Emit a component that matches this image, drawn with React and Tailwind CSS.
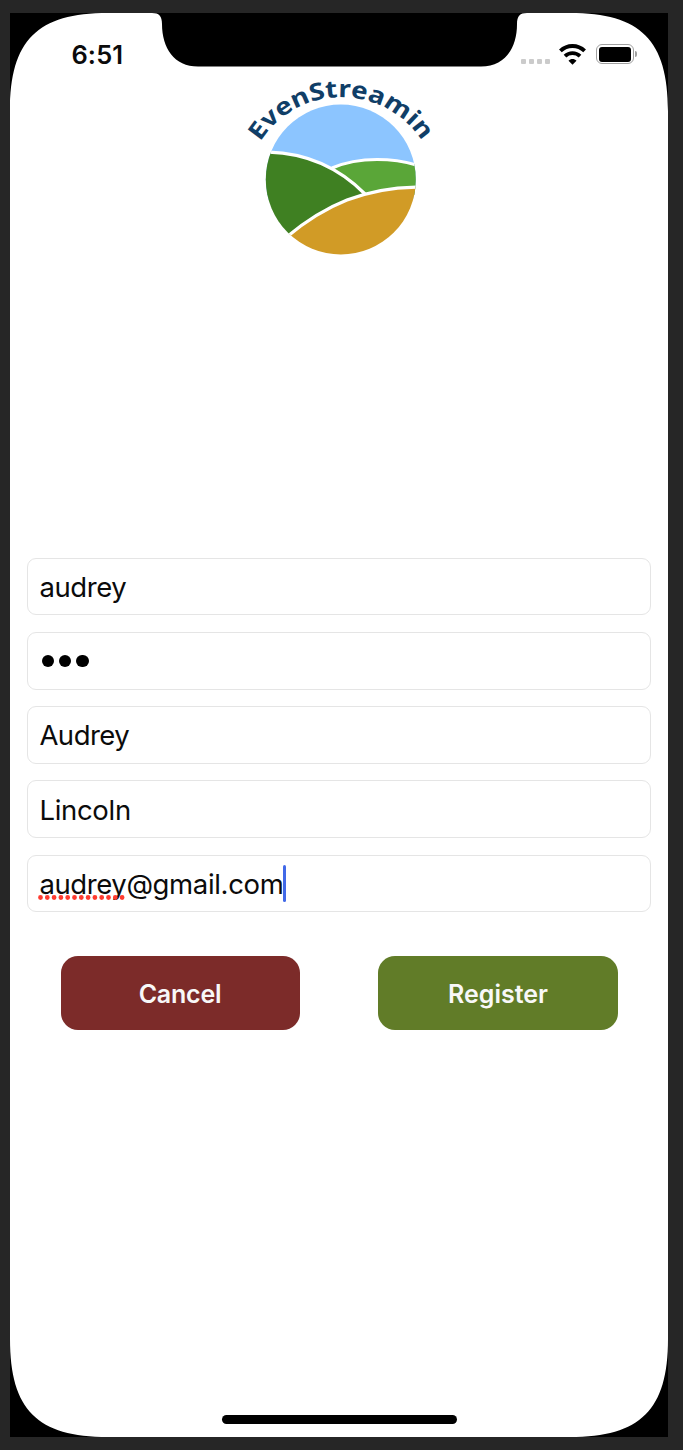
import React from "react";

const CORNER = "M0 0H98C27.3 0 0 27.3 0 98Z";

function Corner({ className }) {
  return (
    <svg viewBox="0 0 98 98" className={`absolute h-[98px] w-[98px] ${className}`}>
      <path d={CORNER} fill="#000" />
    </svg>
  );
}

function Notch() {
  return (
    <svg viewBox="0 0 376 54" className="absolute left-[141.5px] top-0 h-[54px] w-[376px]">
      <path
        d="M0 0C7 0 10 3 10 11C10 35 22 53.5 46 53.5H329C353 53.5 365 35 365 11C365 3 368 0 375 0Z"
        fill="#000"
      />
    </svg>
  );
}

function WifiIcon() {
  return (
    <svg viewBox="0 0 27 21" className="h-[21px] w-[27px]" fill="none" stroke="#000">
      <path d="M1.4 6.9C8.2 .3 18.8 .3 25.6 6.9" strokeWidth="3.9" />
      <path d="M6 12.1C10.2 8.1 16.8 8.1 21 12.1" strokeWidth="3.8" />
      <path d="M9.5 16.7C11.6 14.3 15.4 14.3 17.5 16.7L13.5 20.7Z" fill="#000" stroke="none" />
    </svg>
  );
}

function StatusBar() {
  return (
    <div className="flex h-[67px] items-start justify-between pl-[61px] pr-[31.2px]">
      <span className="mt-[26px] text-[25.5px] font-semibold leading-[32px] tracking-[0.15px]">6:51</span>
      <div className="mt-[31px] flex h-[21px] items-center">
        <div className="mr-[9px] mt-[14px] flex gap-[2.8px]">
          {[0, 1, 2, 3].map((i) => (
            <span key={i} className="h-[5.4px] w-[5.2px] rounded-[1px] bg-[#cbcbcb]" />
          ))}
        </div>
        <WifiIcon />
        <div className="ml-[10px] h-[20px] w-[38px] rounded-[6px] border-[1.5px] border-[#a0a0a0] p-[1.8px]">
          <div className="h-full rounded-[3px] bg-black" />
        </div>
        <span className="ml-[1.5px] h-[6px] w-[2px] rounded-r-full bg-[#a0a0a0]" />
      </div>
    </div>
  );
}

function Logo() {
  return (
    <svg viewBox="0 0 210 195" className="ml-[224.5px] mt-[-9.8px] h-[195px] w-[210px] shrink-0">
      <defs>
        <clipPath id="disc">
          <circle cx="105.8" cy="109.5" r="75" />
        </clipPath>
        <path id="arc" d="M25.2 71.9A95.9 95.9 0 0 1 187.4 71.9" />
      </defs>
      <g clipPath="url(#disc)">
        <path d="M0 0H210V130H0Z" fill="#8cc5ff" />
        <path d="M97 98C125 86 160 88 185 96V125H97Z" fill="#5aa638" />
        <path d="M25 82.2H34C62 83 98 92 130 124L51 167.5H25Z" fill="#3f8022" />
        <path d="M51 167.5C90 135 130 117 185 117V195H51Z" fill="#d19b26" />
        <g fill="none" stroke="#fff" strokeWidth="3.2">
          <path d="M97 98C125 86 160 88 185 96" />
          <path d="M25 82.2H34C62 83 98 92 130 124" />
          <path d="M51 167.5C90 135 130 117 185 117" />
        </g>
      </g>
      <text
        fill="#103e67"
        fontFamily="Noto Sans, sans-serif"
        fontSize="24"
        fontWeight="700"
        textLength="192"
        lengthAdjust="spacingAndGlyphs"
      >
        <textPath href="#arc">EvenStreamin</textPath>
      </text>
    </svg>
  );
}

function Field({ children }) {
  return (
    <div className="flex h-[57.8px] items-center rounded-[9px] border border-[#e5e5e5] pl-[11px] text-[27.5px] leading-[36px]">
      {children}
    </div>
  );
}

export default function App() {
  return (
    <div className="h-[1450px] w-[683px] bg-[#262626] pl-[10.4px] pt-[12.8px] font-['Inter',sans-serif] text-[#0b0b0b]">
      <div className="relative flex h-[1424.4px] w-[658px] flex-col overflow-hidden bg-white">
        <Corner className="left-0 top-0" />
        <Corner className="right-0 top-0 -scale-x-100" />
        <Corner className="bottom-0 left-0 -scale-y-100" />
        <Corner className="bottom-0 right-0 -scale-100" />
        <Notch />

        <StatusBar />
        <Logo />

        <form className="mt-[292.5px] flex flex-col gap-[16.5px] pl-[17px] pr-[17px]">
          <Field>
            <span className="pt-[2px] tracking-[-0.4px]">audrey</span>
          </Field>
          <Field>
            <div className="flex gap-[4.6px] pl-[2.3px] pt-[1px]">
              {[0, 1, 2].map((i) => (
                <span key={i} className="h-[12.6px] w-[12.6px] rounded-full bg-black" />
              ))}
            </div>
          </Field>
          <Field>
            <span className="pt-[1px] tracking-[-0.5px]">Audrey</span>
          </Field>
          <Field>
            <span className="pt-[2px] tracking-[-0.3px]">Lincoln</span>
          </Field>
          <Field>
            <span className="relative tracking-[-0.4px]">
              audrey
              <svg viewBox="0 0 88 5" className="absolute left-[-1px] top-[29px] h-[5px] w-[88px]">
                <path d="M2.5 2.5H87" stroke="#ff3b30" strokeWidth="4.8" strokeLinecap="round" strokeDasharray="0 6.8" />
              </svg>
            </span>
            <span className="tracking-[-0.35px]">@gmail.com</span>
            <span className="h-[37px] w-[3px] rounded-full bg-[#4169e8]" />
          </Field>
        </form>

        <div className="mt-[43.7px] flex justify-between pl-[50.3px] pr-[50.5px]">
          <button className="h-[74.3px] w-[239.7px] rounded-[17px] bg-[#7c2b29] pr-[1px] pt-[3px] text-[25px] font-semibold tracking-[-0.2px] text-[#f8f8f8]">
            Cancel
          </button>
          <button className="h-[74.3px] w-[239.7px] rounded-[17px] bg-[#617c28] pt-[3px] text-[25px] font-semibold text-[#f8f8f8]">
            Register
          </button>
        </div>

        <div className="mb-[13.3px] ml-[211.8px] mt-auto h-[8.5px] w-[234.7px] shrink-0 rounded-full bg-black" />
      </div>
    </div>
  );
}
